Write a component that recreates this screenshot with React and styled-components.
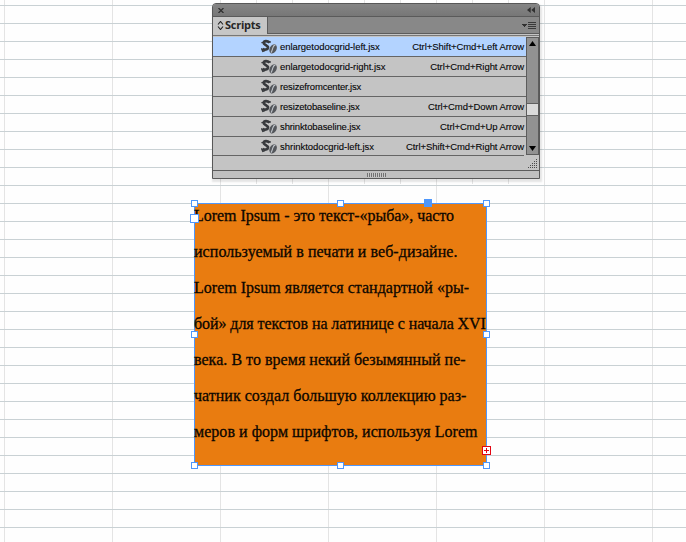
import React from "react";
import styled, { createGlobalStyle } from "styled-components";

const GlobalStyle = createGlobalStyle`
  *, *::before, *::after { box-sizing: border-box; }
  body { margin: 0; overflow: hidden; background: #fefefe; }
`;

/* Page with the baseline grid and the document grid */
const Pasteboard = styled.main`
  display: flex;
  flex-direction: column;
  align-items: flex-start;
  width: 686px;
  height: 542px;
  overflow: hidden;
  background-color: #fefefe;
  background-image:
    linear-gradient(#c9d1d4 1px, transparent 1px),
    linear-gradient(90deg, #e4e4e4 1px, transparent 1px);
  background-size: 686px 18px, 108px 542px;
  background-position: 0 5px, 4px 0;
`;

/* Holds the floating panel; the grid's subdivisions show around it */
const PanelZone = styled.div`
  width: 328px;
  height: 184px;
  margin-left: 212px;
  padding-top: 3px;
  background: linear-gradient(90deg, #e4e4e4 1px, transparent 1px) 8px 0 / 36px 184px;
`;

const Panel = styled.section`
  display: flex;
  flex-direction: column;
  width: 328px;
  height: 176px;
  border: 1px solid #585858;
  border-radius: 4px 4px 0 0;
  background: #c4c4c4;
  box-shadow: 1px 2px 2px 1px rgba(0, 0, 0, 0.1);
`;

const TitleBar = styled.header`
  display: flex;
  align-items: center;
  justify-content: space-between;
  height: 13px;
  padding: 0 4px 0 5px;
  border-bottom: 1px solid #5a5a5a;
  border-radius: 3px 3px 0 0;
  background: linear-gradient(#858585, #777777);
`;

const TabBar = styled.div`
  display: flex;
  align-items: stretch;
  justify-content: space-between;
  height: 17px;
  padding-right: 3px;
  border-bottom: 1px solid #5c5c5c;
  background: #888888;
`;

const Tab = styled.div`
  display: flex;
  align-items: center;
  gap: 1px;
  width: 55px;
  height: 17px;
  padding-left: 4px;
  border-right: 1px solid #5c5c5c;
  background: #c6c6c6;
  color: #262626;
  font: bold 11px/15px "Open Sans", sans-serif;
  letter-spacing: -0.25px;
`;

const TabLabel = styled.span`
  margin-top: -2px;
`;

const Body = styled.div`
  display: flex;
  height: 119px;
  margin-top: 1px;
  border-top: 1px solid #777777;
`;

const List = styled.ul`
  flex: 1;
  margin: 0;
  padding: 1px 0 0;
  list-style: none;
  font: 9.5px/18px "Liberation Sans", Arial, sans-serif;
  color: #050505;
  background: #c4c4c4;
`;

const Row = styled.li`
  display: flex;
  align-items: center;
  height: 20px;
  padding: 0 2px 0 48px;
  border-bottom: 1px solid #656565;
  background: ${({ $selected }) => ($selected ? "#b3d3ff" : "transparent")};
  &:last-child {
    height: 19px;
    margin-right: 2px;
    padding-right: 0;
  }
  &:last-child > svg { margin-top: 1px; }
`;

const ScriptName = styled.span`
  flex: 1;
  margin-left: 3px;
  padding-top: 1px;
  white-space: nowrap;
  letter-spacing: ${({ $tracking }) => $tracking}px;
  -webkit-text-stroke: 0.1px #050505;
`;

const Shortcut = styled.span`
  padding-top: 1px;
  white-space: nowrap;
  letter-spacing: -0.06px;
  -webkit-text-stroke: 0.1px #050505;
`;

const ScrollBar = styled.div`
  display: flex;
  flex-direction: column;
  align-items: center;
  width: 13px;
  height: 118px;
  margin-top: 1px;
  border: 1px solid #5c5c5c;
  background: #929292;
`;

const ScrollTrack = styled.div`
  flex: 1;
  align-self: stretch;
  padding-top: 54px;
`;

const Thumb = styled.div`
  height: 13px;
  border: solid #606060;
  border-width: 1px 0;
  background: #dadada;
`;

const ArrowBox = styled.div`
  display: flex;
  align-items: center;
  justify-content: center;
  height: 11px;
`;

const Footer = styled.footer`
  display: flex;
  justify-content: flex-end;
  align-items: flex-end;
  flex: 1;
  padding: 0 2px 2px 0;
  border-bottom: 1px solid #5c5c5c;
`;

const BottomGrip = styled.div`
  display: flex;
  align-items: center;
  justify-content: center;
  height: 7px;
  background: #c0c0c0;
`;

const GripLines = styled.div`
  width: 19px;
  height: 4px;
  background: repeating-linear-gradient(90deg, #727272 0 1px, #c8c8c8 1px 2px);
`;

const Icon = styled.svg`
  display: block;
  flex: none;
`;

const TextFrame = styled.article`
  position: relative;
  width: 293px;
  height: 263px;
  margin: 19px 0 0 194px;
  border: 1px solid #4e97fc;
  background: #e97c10;
  color: #0c0600;
  font: 16px/36px "Liberation Serif", "Times New Roman", serif;
`;

const TextLine = styled.p`
  height: 36px;
  margin: 0 0 0 -1px;
  white-space: nowrap;
  letter-spacing: ${({ $tracking }) => $tracking}px;
  -webkit-text-stroke: 0.3px #0c0600;
  &:first-of-type { margin-top: -6px; }
`;

/* Selection handles lie over the frame edge, centred on their anchor */
const Handle = styled.i`
  position: absolute;
  left: ${({ $x }) => $x}px;
  top: ${({ $y }) => $y}px;
  width: ${({ $size = 7 }) => $size}px;
  height: ${({ $size = 7 }) => $size}px;
  border: 1px solid #4e97fc;
  background: ${({ $solid }) => ($solid ? "#4e97fc" : "#ffffff")};
`;

const Overset = styled(Handle)`
  border-color: #e30613;
  background:
    linear-gradient(#e30613, #e30613) center / 5px 1px no-repeat,
    linear-gradient(#e30613, #e30613) center / 1px 5px no-repeat,
    #ffffff;
`;

const ScriptIcon = () => (
  <Icon width="16" height="16" viewBox="0 0 16 16" aria-hidden="true">
    <path d="M8.6 3.6C6.6 1.8 3 1.6 2.7 3.7c-.3 2.2 4.5 2.6 4.3 4.9-.2 2.1-3.4 2.6-5.6 1.3" fill="none" stroke="#383a3e" strokeWidth="2.7" />
    <path d="M.4 3.6h3M6.5 3h3.3M.4 9.2l1.4 3.1 2.2-.7M3.6 5.2l4.4 3.2" fill="none" stroke="#383a3e" strokeWidth="1.4" />
    <ellipse cx="12.1" cy="9.9" rx="3.4" ry="4.9" transform="rotate(28 12.1 9.9)" fill="#54575c" />
    <path d="M14.4 5.9c-3.5.9-1.9 4-4.3 7.7" fill="none" stroke="#bfc4ca" strokeWidth="1.1" />
  </Icon>
);

const SCRIPTS = [
  { name: "enlargetodocgrid-left.jsx", keys: "Ctrl+Shift+Cmd+Left Arrow", tracking: -0.05, selected: true },
  { name: "enlargetodocgrid-right.jsx", keys: "Ctrl+Cmd+Right Arrow", tracking: -0.05 },
  { name: "resizefromcenter.jsx", tracking: -0.17 },
  { name: "resizetobaseline.jsx", keys: "Ctrl+Cmd+Down Arrow", tracking: -0.17 },
  { name: "shrinktobaseline.jsx", keys: "Ctrl+Cmd+Up Arrow", tracking: -0.12 },
  { name: "shrinktodocgrid-left.jsx", keys: "Ctrl+Shift+Cmd+Right Arrow", tracking: -0.02 },
];

const LINES = [
  ["Lorem Ipsum - это текст-«рыба», часто", -0.04],
  ["используемый в печати и веб-дизайне.", 0.05],
  ["Lorem Ipsum является стандартной «ры-", 0.01],
  ["бой» для текстов на латинице с начала XVI", -0.07],
  ["века. В то время некий безымянный пе-", 0.03],
  ["чатник создал большую коллекцию раз-", 0.01],
  ["меров и форм шрифтов, используя Lorem", 0.04],
];

const ANCHORS = [[-4, -4], [142, -4], [288, -4], [-4, 127], [288, 127], [-4, 258], [142, 258], [288, 258]];

const GRIP_DOTS = [0, 1, 2, 3, 4].flatMap((r) =>
  Array.from({ length: r + 1 }, (_, c) => [8 - c * 2, r * 2])
);

export default function App() {
  return (
    <>
      <GlobalStyle />
      <Pasteboard>
        <PanelZone>
          <Panel>
            <TitleBar>
              <Icon width="6" height="5" viewBox="0 0 6 5">
                <path d="M.5 0l5 5M5.5 0l-5 5" stroke="#2c2c2c" strokeWidth="1.2" />
              </Icon>
              <Icon width="8" height="6" viewBox="0 0 8 6">
                <path d="M3.7 0v6L0 3zM8 0v6L4.3 3z" fill="#303030" />
              </Icon>
            </TitleBar>
            <TabBar>
              <Tab>
                <Icon width="7" height="9" viewBox="0 0 7 9">
                  <path d="M1 3.5l2.5-3 2.5 3M1 5.5l2.5 3 2.5-3" fill="none" stroke="#222" strokeWidth="1.1" />
                </Icon>
                <TabLabel>Scripts</TabLabel>
              </Tab>
              <Icon width="14" height="16" viewBox="0 0 14 16" shapeRendering="crispEdges">
                <path d="M0 7h5L2.5 10z" fill="#303030" />
                <path d="M6 5.5h8M6 7.5h8M6 9.5h8M6 11.5h8" stroke="#3a3a3a" />
              </Icon>
            </TabBar>
            <Body>
              <List>
                {SCRIPTS.map((s) => (
                  <Row key={s.name} $selected={s.selected}>
                    <ScriptIcon />
                    <ScriptName $tracking={s.tracking}>{s.name}</ScriptName>
                    {s.keys && <Shortcut>{s.keys}</Shortcut>}
                  </Row>
                ))}
              </List>
              <ScrollBar>
                <ArrowBox>
                  <Icon width="7" height="5" viewBox="0 0 7 5"><path d="M0 5l3.5-5L7 5z" fill="#000" /></Icon>
                </ArrowBox>
                <ScrollTrack><Thumb /></ScrollTrack>
                <ArrowBox>
                  <Icon width="7" height="5" viewBox="0 0 7 5"><path d="M0 0l3.5 5L7 0z" fill="#000" /></Icon>
                </ArrowBox>
              </ScrollBar>
            </Body>
            <Footer>
              <Icon width="9" height="9" viewBox="0 0 9 9" shapeRendering="crispEdges">
                {GRIP_DOTS.map(([x, y]) => (
                  <rect key={`${x}-${y}`} x={x} y={y} width="1" height="1" fill="#4a4a4a" />
                ))}
              </Icon>
            </Footer>
            <BottomGrip><GripLines /></BottomGrip>
          </Panel>
        </PanelZone>
        <TextFrame>
          {LINES.map(([text, tracking]) => (
            <TextLine key={text} $tracking={tracking}>{text}</TextLine>
          ))}
          {ANCHORS.map(([x, y]) => (
            <Handle key={`${x},${y}`} $x={x} $y={y} />
          ))}
          <Handle $x={-5} $y={10} $size={9} />
          <Handle $x={229} $y={-5} $size={8} $solid />
          <Overset $x={287} $y={242} $size={9} />
        </TextFrame>
      </Pasteboard>
    </>
  );
}
